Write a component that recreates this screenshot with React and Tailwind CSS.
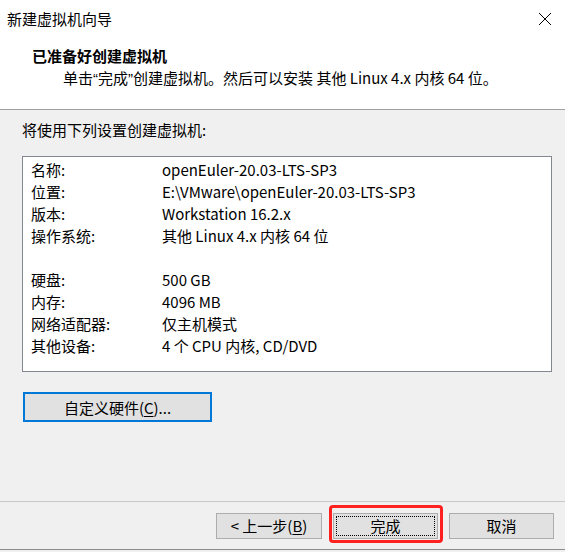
import React from "react";

const rows = [
  ["名称:", "openEuler-20.03-LTS-SP3"],
  ["位置:", "E:\\VMware\\openEuler-20.03-LTS-SP3"],
  ["版本:", "Workstation 16.2.x"],
  ["操作系统:", "其他 Linux 4.x 内核 64 位"],
  ["", ""],
  ["硬盘:", "500 GB"],
  ["内存:", "4096 MB"],
  ["网络适配器:", "仅主机模式"],
  ["其他设备:", "4 个 CPU 内核, CD/DVD"],
];

const Q = ({ children }) => (
  <span style={{ fontFamily: '"Liberation Sans", sans-serif' }}>{children}</span>
);

export default function App() {
  return (
    <div
      className="relative w-[565px] h-[552px] overflow-hidden bg-[#f0f0f0] text-black flex flex-col text-[15px]"
      style={{ fontFamily: '"Noto Sans CJK SC", "Noto Sans", sans-serif' }}
    >
      {/* Header */}
      <div className="h-[110px] bg-white border-b border-[#a0a0a0] flex flex-col shrink-0">
        <div className="h-[37px] flex items-center justify-between pl-[7px] pr-[13px]">
          <span className="leading-[22px]">新建虚拟机向导</span>
          <svg width="14" height="14" viewBox="0 0 14 14" className="text-black">
            <path d="M1 1 L13 13 M13 1 L1 13" stroke="currentColor" strokeWidth="1" fill="none" />
          </svg>
        </div>
        <div className="mt-[8px] h-[22px] leading-[22px] pl-[32px] font-bold">已准备好创建虚拟机</div>
        <div className="h-[22px] leading-[22px] pl-[63px] whitespace-pre">
          单击<Q>“</Q>完成<Q>”</Q>创建虚拟机。然后可以安装 其他 Linux 4.x 内核 64 位。
        </div>
      </div>

      {/* Body */}
      <div className="flex-1 flex flex-col">
        <div className="pt-[9px] pl-[22px] leading-[22px] h-[31px]">将使用下列设置创建虚拟机:</div>
        <div className="mt-[15px] ml-[22px] w-[530px] h-[216px] bg-white border border-[#828790] pt-[2px] pl-[8px]">
          {rows.map(([k, v], i) => (
            <div key={i} className="h-[22px] leading-[22px] flex">
              <span className="w-[131px] shrink-0">{k}</span>
              <span>{v}</span>
            </div>
          ))}
        </div>
        <div className="mt-[20px] ml-[23px]">
          <div className="w-[189px] h-[30px] border-2 border-[#0078d7] bg-[#e1e1e1] flex items-center justify-center leading-none">
            自定义硬件(<span className="underline underline-offset-2">C</span>)...
          </div>
        </div>
      </div>

      {/* Footer */}
      <div className="h-[51px] shrink-0 border-t border-[#c8c8c8] flex flex-col">
        <div className="pt-[11px] pr-[11px] flex justify-end gap-[11px]">
          <div className="w-[106px] h-[26px] bg-[#e1e1e1] border border-[#adadad] flex items-center justify-center whitespace-pre">
            {"< 上一步("}<span className="underline underline-offset-2">B</span>)
          </div>
          <div className="w-[105px] h-[26px] bg-[#e1e1e1] border border-[#adadad] p-[2px]">
            <div className="w-full h-full border border-dotted border-black flex items-center justify-center">
              完成
            </div>
          </div>
          <div className="w-[105px] h-[26px] bg-[#e1e1e1] border border-[#adadad] flex items-center justify-center">
            取消
          </div>
        </div>
        <div className="mt-[10px] border-b border-[#8c8c8c]" />
      </div>

      {/* Red annotation */}
      <div className="absolute left-[329px] top-[505px] w-[114px] h-[38px] border-[3px] border-[#ff2020] rounded-[4px] pointer-events-none" />
    </div>
  );
}
